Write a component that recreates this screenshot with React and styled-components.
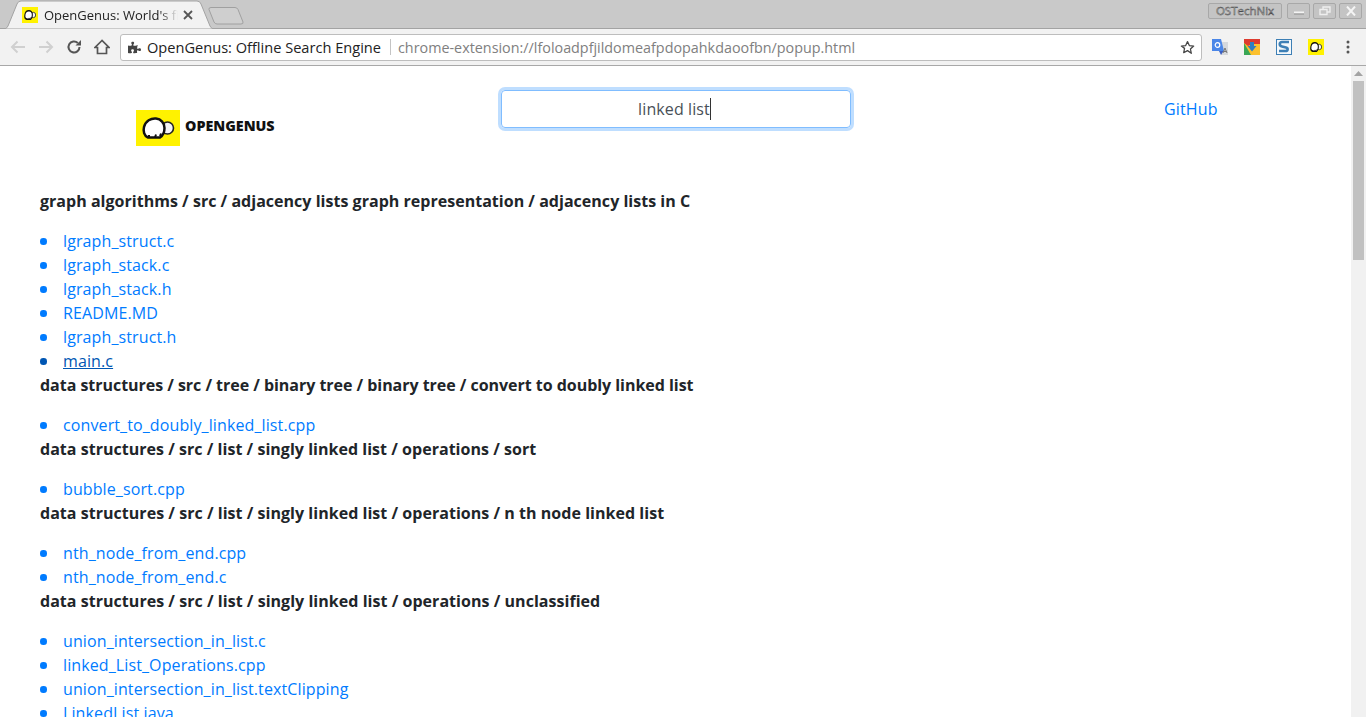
import React from 'react'
import styled, { createGlobalStyle } from 'styled-components'
import { FaPuzzlePiece } from 'react-icons/fa'

const GlobalStyle = createGlobalStyle`
  html, body {
    margin: 0;
    height: 717px;
    overflow: hidden;
    background: #fff;
    font-family: "Open Sans", sans-serif;
  }
`

const Browser = styled.div`
  width: 1366px;
  height: 717px;
  display: flex;
  flex-direction: column;
  overflow: hidden;
`

const TabStrip = styled.div`
  height: 28px;
  flex: none;
  display: flex;
  background: #c9c9c9;
  border-bottom: 1px solid #a3a3a3;
  position: relative;
`

const TabShape = styled.svg`
  position: absolute;
  left: 0;
  top: 0;
`

const Tab = styled.div`
  position: relative;
  margin-left: 22px;
  width: 178px;
  height: 29px;
  display: flex;
  align-items: center;
  font-size: 13px;
  color: #222;
`

const TabTitle = styled.span`
  margin-left: 6px;
  width: 134px;
  flex: none;
  white-space: nowrap;
  overflow: hidden;
  -webkit-mask-image: linear-gradient(to right, #000 86%, transparent 100%);
  mask-image: linear-gradient(to right, #000 86%, transparent 100%);
`

const TabClose = styled.svg`
  margin-left: 5px;
  flex: none;
`

const WindowControls = styled.div`
  margin-left: auto;
  display: flex;
  gap: 3px;
  padding: 3px 4px 0 0;
  height: 16px;
`

const ProfileChip = styled.div`
  width: 72px;
  height: 14px;
  margin-right: 2px;
  border: 1px solid #a8a8a8;
  border-radius: 2px;
  background: #c4c4c4;
  font-size: 11.5px;
  line-height: 14px;
  text-align: center;
  color: #e2e2e2;
  -webkit-text-stroke: 0.5px #4a4a4a;
`

const WindowButton = styled.div`
  width: 21px;
  height: 14px;
  border: 1px solid #a8a8a8;
  border-radius: 2px;
  background: #c4c4c4;
  display: flex;
  align-items: center;
  justify-content: center;
`

const Toolbar = styled.div`
  height: 36px;
  flex: none;
  display: flex;
  align-items: center;
  background: #f2f2f2;
  border-bottom: 1px solid #a8a8a8;
  padding-left: 8px;
`

const NavIcon = styled.svg`
  flex: none;
  margin-right: ${({ $gap }) => $gap}px;
`

const Omnibox = styled.div`
  width: 1082px;
  height: 27px;
  flex: none;
  display: flex;
  align-items: center;
  box-sizing: border-box;
  background: #fff;
  border: 1px solid #bdbdbd;
  border-radius: 3px;
  padding: 0 6px 0 7px;
  font-size: 14.6px;
`

const PageName = styled.span`
  margin-left: 6px;
  color: #222;
  white-space: nowrap;
`

const Divider = styled.span`
  width: 1px;
  height: 16px;
  background: #c4c4c4;
  margin: 0 7px 0 9px;
`

const Address = styled.span`
  color: #808080;
  white-space: nowrap;
  flex: 1;
  font-size: 14.35px;
`

const Extensions = styled.div`
  display: flex;
  align-items: center;
  gap: 16px;
  margin-left: 10px;
`

const MenuDots = styled.svg`
  margin-left: 22px;
`

const Viewport = styled.div`
  flex: 1;
  min-height: 0;
  display: flex;
`

const Page = styled.main`
  flex: 1;
  min-width: 0;
  overflow: hidden;
  color: #212529;
  font-size: 16px;
  line-height: 24px;
`

const Header = styled.header`
  height: 123px;
  display: grid;
  grid-template-columns: 501px 350px 1fr;
`

const LogoLink = styled.div`
  display: flex;
  align-items: center;
  padding: 44px 0 0 136px;
  height: 36px;
  gap: 5px;
`

const LogoText = styled.span`
  font-size: 14.3px;
  font-weight: 800;
  color: #111;
  margin-bottom: 4px;
`

const SearchBox = styled.div`
  margin-top: 24px;
  height: 36px;
  border: 1px solid #80bdff;
  border-radius: 4px;
  box-shadow: 0 0 0 3px rgba(0, 123, 255, 0.25);
  color: #495057;
  display: flex;
  align-items: center;
  justify-content: center;
  padding-right: 3px;
  letter-spacing: 0.11px;
`

const Caret = styled.span`
  width: 1px;
  height: 22px;
  background: #333;
`

const GitHubLink = styled.a`
  color: #007bff;
  margin: 31px 0 0 313px;
  letter-spacing: 0.13px;
`

const Results = styled.div`
  padding-left: 40px;
`

const Folder = styled.p`
  margin: 0 0 16px;
  font-weight: 700;
  letter-spacing: ${({ $tracking }) => $tracking}px;
`

const FileList = styled.ul`
  margin: 0;
  padding-left: 23px;
  list-style: none;
`

const FileItem = styled.li`
  position: relative;

  &::before {
    content: '';
    position: absolute;
    left: -23px;
    top: 9px;
    width: 6.5px;
    height: 6.5px;
    border-radius: 50%;
    background: ${({ $hover }) => ($hover ? '#0056b3' : '#007bff')};
  }
`

const FileLink = styled.a`
  color: ${({ $hover }) => ($hover ? '#0056b3' : '#007bff')};
  text-decoration: ${({ $hover }) => ($hover ? 'underline' : 'none')};
  letter-spacing: 0.11px;
`

const ScrollTrack = styled.div`
  width: 15px;
  flex: none;
  background: #f1f1f1;
  display: flex;
  flex-direction: column;
  align-items: center;
`

const ScrollArrow = styled.svg`
  margin-top: 5px;
  flex: none;
`

const ScrollThumb = styled.div`
  width: 11px;
  height: 179px;
  margin-top: 5px;
  background: #c1c1c1;
`

const groups = [
  {
    path: 'graph algorithms / src / adjacency lists graph representation / adjacency lists in C',
    tracking: 0.024,
    files: ['lgraph_struct.c', 'lgraph_stack.c', 'lgraph_stack.h', 'README.MD', 'lgraph_struct.h', 'main.c'],
  },
  {
    path: 'data structures / src / tree / binary tree / binary tree / convert to doubly linked list',
    tracking: -0.033,
    files: ['convert_to_doubly_linked_list.cpp'],
  },
  {
    path: 'data structures / src / list / singly linked list / operations / sort',
    tracking: 0.03,
    files: ['bubble_sort.cpp'],
  },
  {
    path: 'data structures / src / list / singly linked list / operations / n th node linked list',
    tracking: 0.035,
    files: ['nth_node_from_end.cpp', 'nth_node_from_end.c'],
  },
  {
    path: 'data structures / src / list / singly linked list / operations / unclassified',
    tracking: 0.038,
    files: ['union_intersection_in_list.c', 'linked_List_Operations.cpp', 'union_intersection_in_list.textClipping', 'LinkedList.java'],
  },
]

function GenusMark({ width, height, stroke = 2 }) {
  return (
    <svg width={width} height={height} viewBox="0 0 44 36" preserveAspectRatio="none">
      <rect width="44" height="36" fill="#fff200" />
      <circle cx="31.500" cy="18" r="6" fill="#f4f4f4" stroke="#222" strokeWidth={stroke * 0.8} />
      <path d="M12 27.500C8 26 7 21 8 17c1.500-6 7-9 12-8.500 5 .5 8.500 4.500 8.500 9.500 0 4-1.500 7.500-4.500 9.500z" fill="#fff" stroke="#111" strokeWidth={stroke * 1.25} strokeLinejoin="round" />
      <path d="M13 27.500v-2.500M19 27.500l1-3M24 26l1-2.500" fill="none" stroke="#111" strokeWidth={stroke} />
    </svg>
  )
}

export default function App() {
  return (
    <Browser>
      <GlobalStyle />
      <TabStrip>
        <TabShape width="250" height="29">
          <path d="M211 7.500 H235 Q237 7.500 238 9.500 L243 22 Q243.500 24 241 24 H217 Q215 24 214 22 L209 9.500 Q208.500 7.500 211 7.500 Z" fill="#cfcfcf" stroke="#a0a0a0" />
          <path d="M5 29 Q7 28 8 26 L17 4 Q18 1 21 1 H197 Q200 1 201 4 L210 26 Q211 28 213 29 Z" fill="#f2f2f2" stroke="#a3a3a3" />
        </TabShape>
        <Tab>
          <GenusMark width={16} height={16} stroke={2.4} />
          <TabTitle>OpenGenus: World's first</TabTitle>
          <TabClose width="10" height="10" viewBox="0 0 10 10">
            <path d="M1 1l8 8M9 1l-8 8" stroke="#555" strokeWidth="1.8" />
          </TabClose>
        </Tab>
        <WindowControls>
          <ProfileChip>OSTechNix</ProfileChip>
          <WindowButton>
            <svg width="12" height="8" viewBox="0 0 12 8"><path d="M1 5.500h10" stroke="#f4f4f4" strokeWidth="2" /><path d="M1 7h10" stroke="#8f8f8f" /></svg>
          </WindowButton>
          <WindowButton>
            <svg width="12" height="10" viewBox="0 0 12 10"><path d="M4 3V1h7v5H8.500M1 3.500h7v5H1z" fill="none" stroke="#eee" strokeWidth="1.400" /></svg>
          </WindowButton>
          <WindowButton>
            <svg width="12" height="10" viewBox="0 0 12 10"><path d="M2 0.500l8 9M10 0.500l-8 9" stroke="#f4f4f4" strokeWidth="2" /></svg>
          </WindowButton>
        </WindowControls>
      </TabStrip>
      <Toolbar>
        <NavIcon $gap={8} width="20" height="16" viewBox="0 0 20 16">
          <path d="M17 8H4M9.500 2.500L4 8l5.500 5.500" fill="none" stroke="#d0d0d0" strokeWidth="2" />
        </NavIcon>
        <NavIcon $gap={10} width="20" height="16" viewBox="0 0 20 16">
          <path d="M3 8h13M10.500 2.500L16 8l-5.500 5.500" fill="none" stroke="#d0d0d0" strokeWidth="2" />
        </NavIcon>
        <NavIcon $gap={12} width="16" height="16" viewBox="0 0 16 16">
          <path d="M13.500 8A5.500 5.500 0 1 1 11.800 4" fill="none" stroke="#555" strokeWidth="2" />
          <path d="M9.500 6.500h5.500V1z" fill="#555" />
        </NavIcon>
        <NavIcon $gap={10} width="16" height="16" viewBox="0 0 16 16">
          <path d="M8 1.500L1 8.500h2.500v6h9v-6H15z" fill="none" stroke="#555" strokeWidth="1.700" />
        </NavIcon>
        <Omnibox>
          <FaPuzzlePiece size={13} color="#444" />
          <PageName>OpenGenus: Offline Search Engine</PageName>
          <Divider />
          <Address>chrome-extension://lfoloadpfjildomeafpdopahkdaoofbn/popup.html</Address>
          <svg width="15" height="15" viewBox="0 0 24 24">
            <path d="M12 2.500l2.900 6.400 7 .8-5.200 4.700 1.400 6.900L12 17l-6.100 3.300 1.400-6.900L2.100 9.700l7-.8z" fill="none" stroke="#444" strokeWidth="2" strokeLinejoin="round" />
          </svg>
        </Omnibox>
        <Extensions>
          <svg width="16" height="16" viewBox="0 0 16 16">
            <path d="M9 3h7v13H9z" fill="#d5d8dc" />
            <path d="M0 0h9l3 12H0z" fill="#4a86e8" />
            <path d="M7 12h4.500L9 16z" fill="#3b5fc4" />
            <circle cx="5.500" cy="6" r="2.300" fill="none" stroke="#fff" strokeWidth="1.200" />
            <path d="M11 14l2-5 2 5M11.500 12.500h3" fill="none" stroke="#777" />
          </svg>
          <svg width="16" height="16" viewBox="0 0 16 16">
            <rect width="16" height="16" fill="#fbc02d" />
            <path d="M0 0h16v5H8L4 7 0 4z" fill="#dd3b2f" />
            <path d="M0 4l7 12H0z" fill="#3aa655" />
            <path d="M6 3h4v4h2.500L8 12.500 3.500 7H6z" fill="#2f7fc0" />
          </svg>
          <svg width="16" height="16" viewBox="0 0 16 16">
            <rect x="0.500" y="0.500" width="15" height="15" fill="#f4f8fb" stroke="#3d7fb5" />
            <path d="M13 3H6C3 3 3 7 6 7.500l4 1c2.500.7 2 3.500-.5 3.500H3" fill="none" stroke="#3d7fb5" strokeWidth="2.600" />
          </svg>
          <GenusMark width={16} height={16} stroke={2.4} />
        </Extensions>
        <MenuDots width="4" height="14" viewBox="0 0 4 14">
          <circle cx="2" cy="2" r="1.500" fill="#555" />
          <circle cx="2" cy="7" r="1.500" fill="#555" />
          <circle cx="2" cy="12" r="1.500" fill="#555" />
        </MenuDots>
      </Toolbar>
      <Viewport>
        <Page>
          <Header>
            <LogoLink>
              <GenusMark width={44} height={36} />
              <LogoText>OPENGENUS</LogoText>
            </LogoLink>
            <SearchBox>
              linked list
              <Caret />
            </SearchBox>
            <GitHubLink>GitHub</GitHubLink>
          </Header>
          <Results>
            {groups.map((group) => (
              <section key={group.path}>
                <Folder $tracking={group.tracking}>{group.path}</Folder>
                <FileList>
                  {group.files.map((file) => (
                    <FileItem key={file} $hover={file === 'main.c'}>
                      <FileLink $hover={file === 'main.c'}>{file}</FileLink>
                    </FileItem>
                  ))}
                </FileList>
              </section>
            ))}
          </Results>
        </Page>
        <ScrollTrack>
          <ScrollArrow width="9" height="5" viewBox="0 0 9 5">
            <path d="M4.500 0L9 5H0z" fill="#a3a3a3" />
          </ScrollArrow>
          <ScrollThumb />
        </ScrollTrack>
      </Viewport>
    </Browser>
  )
}
